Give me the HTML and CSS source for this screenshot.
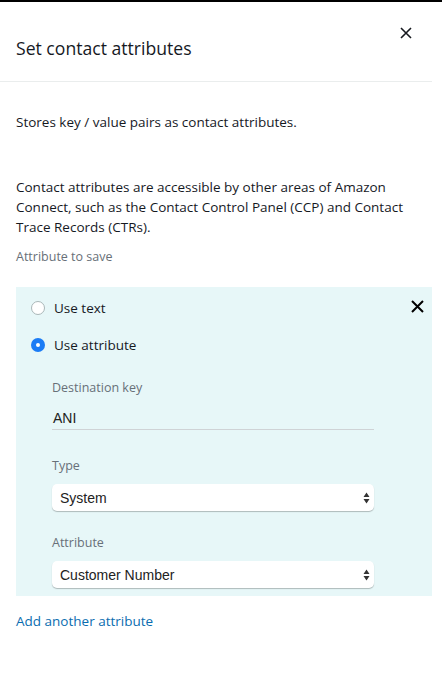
FILE: index.html
```html
<!DOCTYPE html>
<html>
<head>
<meta charset="utf-8">
<link rel="stylesheet" href="styles.css">
</head>
<body>
<div class="panel">
  <header class="head">
    <h1 class="title">Set contact attributes</h1>
    <button class="close" aria-label="Close">
      <svg width="12" height="12" viewBox="0 0 12 12"><path d="M1 1L11 11M11 1L1 11" stroke="#16191f" stroke-width="1.6" fill="none"/></svg>
    </button>
  </header>
  <div class="body">
    <p class="desc">Stores key / value pairs as contact attributes.</p>
    <p class="desc2">Contact attributes are accessible by other areas of Amazon Connect, such as the Contact Control Panel (CCP) and Contact Trace Records (CTRs).</p>
    <div class="label">Attribute to save</div>
    <div class="card">
      <button class="remove" aria-label="Remove">
        <svg width="13" height="13" viewBox="0 0 13 13"><path d="M1 1L12 12M12 1L1 12" stroke="#000" stroke-width="2" fill="none"/></svg>
      </button>
      <div class="radio-row"><span class="radio"></span><span>Use text</span></div>
      <div class="radio-row"><span class="radio on"></span><span>Use attribute</span></div>
      <div class="fields">
        <div class="flabel">Destination key</div>
        <div class="input">ANI</div>
        <div class="flabel gap">Type</div>
        <div class="select"><span>System</span><svg class="arrows" width="7" height="12" viewBox="0 0 7 12"><path d="M3.5 0.5L6.5 5H0.5Z M3.5 11.5L6.5 7H0.5Z" fill="#333"/></svg></div>
        <div class="flabel gap2">Attribute</div>
        <div class="select"><span>Customer Number</span><svg class="arrows" width="7" height="12" viewBox="0 0 7 12"><path d="M3.5 0.5L6.5 5H0.5Z M3.5 11.5L6.5 7H0.5Z" fill="#333"/></svg></div>
      </div>
    </div>
    <a class="add" href="#">Add another attribute</a>
  </div>
</div>
</body>
</html>
```
FILE: styles.css
```css
* { box-sizing: border-box; }
html, body { margin: 0; padding: 0; background: #fff; }
body {
  font-family: "Open Sans", "Noto Sans", sans-serif;
  color: #16191f;
  border-top: 2px solid #000;
}
.panel { width: 432px; }
.head {
  display: flex;
  justify-content: space-between;
  align-items: flex-start;
  padding: 34px 20px 0 16px;
  height: 80px;
  border-bottom: 1px solid #eaeded;
}
.title {
  margin: 0;
  font-size: 17.6px;
  font-weight: 400;
  line-height: 24px;
}
.close {
  border: 0; background: none; padding: 0; margin-top: -9px;
  width: 12px; height: 12px; display: flex;
}
.body { padding: 0 0 0 16px; }
.desc { margin: 30px 0 0; font-size: 13.5px; line-height: 20px; }
.desc2 { margin: 45px 0 0; font-size: 13.5px; line-height: 20px; }
.label { margin-top: 10px; font-size: 12.5px; color: #687078; line-height: 20px; }
.card {
  position: relative;
  margin-top: 20px;
  background: #e7f7f8;
  padding: 10px 0 8px 15px;
}
.remove {
  position: absolute; right: 8px; top: 13px;
  border: 0; background: none; padding: 0; width: 13px; height: 13px; display: flex;
}
.radio-row {
  display: flex; align-items: center; gap: 9px;
  font-size: 13.5px; height: 22px; margin-bottom: 15px;
}
.radio {
  width: 14px; height: 14px; border-radius: 50%;
  border: 1px solid #aab7b8; background: #fff;
}
.radio.on {
  border: 0; background: #1b7cf5; position: relative;
}
.radio.on::after {
  content: ""; position: absolute; left: 5px; top: 5px; width: 4px; height: 4px; border-radius: 50%; background: #fff;
}
.fields { padding: 7px 0 0 21px; width: 343px; }
.flabel { font-size: 12.5px; color: #687078; line-height: 20px; }
.flabel.gap { margin-top: 26px; }
.flabel.gap2 { margin-top: 22px; }
.input {
  margin-top: 11px;
  font-family: "Liberation Sans", Arial, sans-serif;
  font-size: 14px; line-height: 18px; color: #222;
  border-bottom: 1px solid #cfd3d6;
  padding: 0 0 2px 1px;
}
.select {
  margin-top: 8px;
  height: 27px;
  background: #fff;
  border-radius: 5px;
  box-shadow: 0 1px 1px rgba(0,0,0,0.25);
  display: flex; align-items: center; justify-content: space-between;
  padding: 0 4px 0 8px;
  font-family: "Liberation Sans", Arial, sans-serif;
  font-size: 14px; color: #222;
}
.arrows { display: block; }
.add {
  display: block; margin-top: 15px;
  color: #0a6db0; text-decoration: none; font-size: 13.5px; line-height: 20px;
}
```
